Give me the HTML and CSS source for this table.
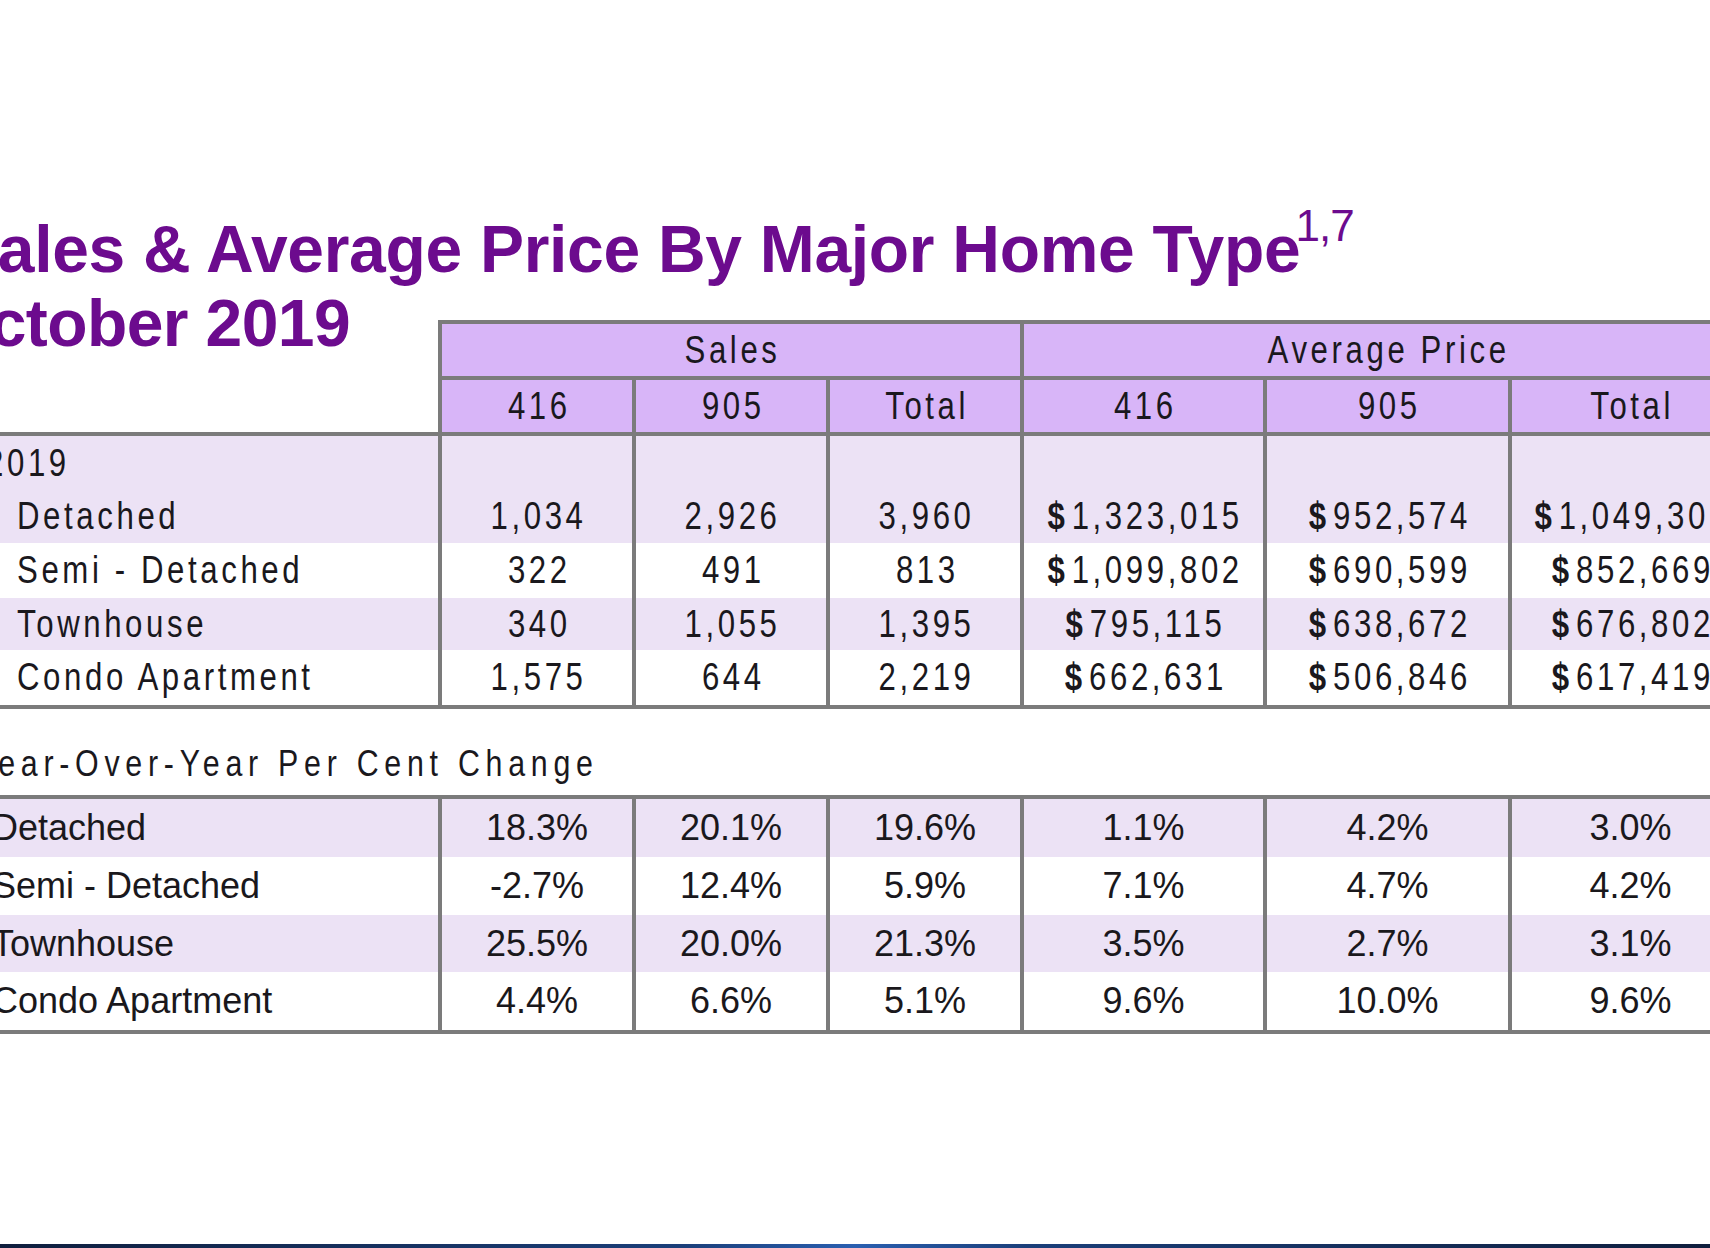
FILE: index.html
```html
<!DOCTYPE html>
<html lang="en">
<head>
<meta charset="utf-8">
<title>Sales &amp; Average Price By Major Home Type</title>
<link rel="stylesheet" href="styles.css">
</head>
<body>
<div class="page">
  <div class="sheet">
    <h1 class="title"><span class="line1">Sales &amp; Average Price By Major Home Type<sup class="note">1,7</sup></span><span class="line2">October 2019</span></h1>

    <div class="grid t1">
      <div class="corner"></div>
      <div class="c hd top bot span3"><span class="n">Sales</span></div>
      <div class="c hd top bot span3 end"><span class="n">Average Price</span></div>
      <div class="c hd"><span class="n">416</span></div>
      <div class="c hd"><span class="n">905</span></div>
      <div class="c hd"><span class="n">Total</span></div>
      <div class="c hd"><span class="n">416</span></div>
      <div class="c hd"><span class="n">905</span></div>
      <div class="c hd end"><span class="n">Total</span></div>

      <div class="lbl year band top"><span class="n">2019</span></div>
      <div class="c band top"></div>
      <div class="c band top"></div>
      <div class="c band top"></div>
      <div class="c band top"></div>
      <div class="c band top"></div>
      <div class="c band top end"></div>

      <div class="lbl sub band"><span class="n">Detached</span></div>
      <div class="c band"><span class="n">1,034</span></div>
      <div class="c band"><span class="n">2,926</span></div>
      <div class="c band"><span class="n">3,960</span></div>
      <div class="c band"><span class="n"><b class="cur">$</b>1,323,015</span></div>
      <div class="c band"><span class="n"><b class="cur">$</b>952,574</span></div>
      <div class="c band end"><span class="n"><b class="cur">$</b>1,049,301</span></div>

      <div class="lbl sub"><span class="n">Semi - Detached</span></div>
      <div class="c"><span class="n">322</span></div>
      <div class="c"><span class="n">491</span></div>
      <div class="c"><span class="n">813</span></div>
      <div class="c"><span class="n"><b class="cur">$</b>1,099,802</span></div>
      <div class="c"><span class="n"><b class="cur">$</b>690,599</span></div>
      <div class="c end"><span class="n"><b class="cur">$</b>852,669</span></div>

      <div class="lbl sub band"><span class="n">Townhouse</span></div>
      <div class="c band"><span class="n">340</span></div>
      <div class="c band"><span class="n">1,055</span></div>
      <div class="c band"><span class="n">1,395</span></div>
      <div class="c band"><span class="n"><b class="cur">$</b>795,115</span></div>
      <div class="c band"><span class="n"><b class="cur">$</b>638,672</span></div>
      <div class="c band end"><span class="n"><b class="cur">$</b>676,802</span></div>

      <div class="lbl sub bot"><span class="n">Condo Apartment</span></div>
      <div class="c bot"><span class="n">1,575</span></div>
      <div class="c bot"><span class="n">644</span></div>
      <div class="c bot"><span class="n">2,219</span></div>
      <div class="c bot"><span class="n"><b class="cur">$</b>662,631</span></div>
      <div class="c bot"><span class="n"><b class="cur">$</b>506,846</span></div>
      <div class="c bot end"><span class="n"><b class="cur">$</b>617,419</span></div>
    </div>

    <div class="yoy"><span class="n">Year-Over-Year Per Cent Change</span></div>

    <div class="grid t2">
      <div class="lbl band top">Detached</div>
      <div class="c band top">18.3%</div>
      <div class="c band top">20.1%</div>
      <div class="c band top">19.6%</div>
      <div class="c band top">1.1%</div>
      <div class="c band top">4.2%</div>
      <div class="c band top end">3.0%</div>

      <div class="lbl">Semi - Detached</div>
      <div class="c">-2.7%</div>
      <div class="c">12.4%</div>
      <div class="c">5.9%</div>
      <div class="c">7.1%</div>
      <div class="c">4.7%</div>
      <div class="c end">4.2%</div>

      <div class="lbl band">Townhouse</div>
      <div class="c band">25.5%</div>
      <div class="c band">20.0%</div>
      <div class="c band">21.3%</div>
      <div class="c band">3.5%</div>
      <div class="c band">2.7%</div>
      <div class="c band end">3.1%</div>

      <div class="lbl bot">Condo Apartment</div>
      <div class="c bot">4.4%</div>
      <div class="c bot">6.6%</div>
      <div class="c bot">5.1%</div>
      <div class="c bot">9.6%</div>
      <div class="c bot">10.0%</div>
      <div class="c bot end">9.6%</div>
    </div>
  </div>
  <div class="strip"></div>
</div>
</body>
</html>
```
FILE: styles.css
```css
* { box-sizing: border-box; }

html, body {
  margin: 0;
  padding: 0;
  background: #ffffff;
  overflow: hidden;
}

.page {
  height: 1248px;
  display: flex;
  flex-direction: column;
  overflow: hidden;
}

.sheet {
  margin-left: -44px;
  width: 1800px;
  flex-shrink: 0;
}

.title {
  margin: 212px 0 -40px;
  font-family: "Liberation Sans", Arial, sans-serif;
  font-weight: bold;
  font-size: 66px;
  line-height: 74px;
  letter-spacing: -0.3px;
  color: #6c0b8e;
}

.line1 {
  display: block;
  margin-left: -2px;
}

.line2 {
  display: block;
  margin-left: -17px;
  letter-spacing: -0.6px;
}

.note {
  font-size: 44px;
  font-weight: normal;
  vertical-align: 31px;
  line-height: 0;
  letter-spacing: -1px;
  margin-left: -5px;
}

.grid {
  display: grid;
  grid-template-columns: 482px 194px 194px 194px 243px 245px 245px;
}

.t1 {
  grid-template-rows: 60px 52px 58px 53px 55px 52px 59px;
  font-family: "Liberation Sans", Arial, sans-serif;
  font-size: 38px;
  color: #1a181d;
}

/* narrow, letter-spaced face of the original slide */
.n {
  display: inline-block;
  letter-spacing: 4.4px;
  transform: scaleX(0.82);
  white-space: nowrap;
}

.t2 {
  grid-template-rows: 62px 58px 57px 62px;
  font-family: "Liberation Sans", Arial, sans-serif;
  font-size: 36px;
  color: #1a181c;
}

.corner { grid-row: span 2; }
.span3 { grid-column: span 3; }

.c, .lbl {
  display: flex;
  align-items: center;
  white-space: nowrap;
}

.c {
  justify-content: center;
  border-left: 4px solid #7b7b7b;
}

.t1 .c { padding-left: 4px; }

.lbl { justify-content: flex-start; }
.lbl .n { transform-origin: left center; }
.t1 .year { padding-left: 30px; }
.t1 .sub { padding-left: 61px; }
.t2 .lbl { padding-left: 36px; }

.hd { background: #d8b5f8; }
.band { background: #ece2f5; }

.top { border-top: 4px solid #7b7b7b; }
.bot { border-bottom: 4px solid #7b7b7b; }
.end { border-right: 4px solid #7b7b7b; }

.cur {
  font-weight: bold;
  margin-right: 4px;
}

.yoy {
  height: 86px;
  display: flex;
  align-items: flex-end;
  padding: 0 0 10px 19px;
  font-family: "Liberation Sans", Arial, sans-serif;
  font-size: 37px;
  color: #1a181d;
}

.yoy .n {
  letter-spacing: 7px;
  transform-origin: left center;
}

.strip {
  margin-top: auto;
  height: 4px;
  flex-shrink: 0;
  background: linear-gradient(90deg, #0f1e3d, #1b3f7a 40%, #2a5fb0 50%, #1b3f7a 60%, #0f1e3d);
}
```
